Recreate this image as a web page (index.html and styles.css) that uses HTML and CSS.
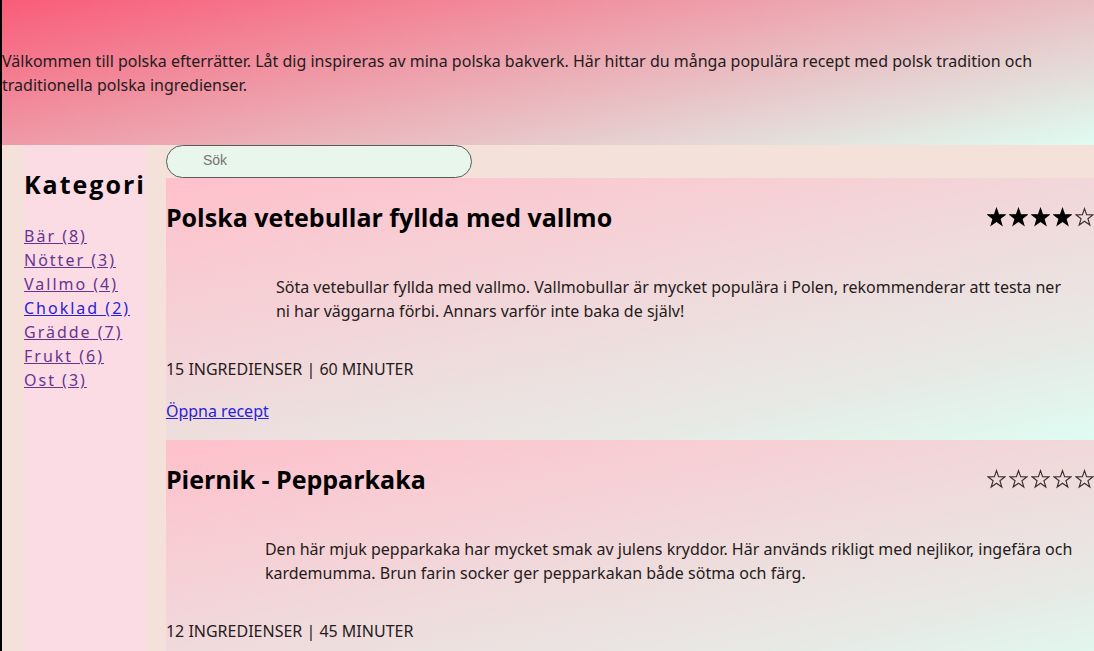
FILE: index.html
```html
<!DOCTYPE html>
<html lang="sv">
<head>
<meta charset="utf-8">
<title>Polska efterrätter</title>
<link rel="stylesheet" href="styles.css">
</head>
<body>
<svg class="symbols" aria-hidden="true">
  <symbol id="star" viewBox="0 0 20 20"><path d="M10 1.2 L12.2 7.6 L19 7.7 L13.6 11.8 L15.6 18.4 L10 14.4 L4.4 18.4 L6.4 11.8 L1 7.7 L7.8 7.6 Z"/></symbol>
</svg>
<header class="hero">
  <p>Välkommen till polska efterrätter. Låt dig inspireras av mina polska bakverk. Här hittar du många populära recept med polsk tradition och traditionella polska ingredienser.</p>
</header>
<div class="layout">
  <nav class="categories">
    <h2>Kategori</h2>
    <ul>
      <li><a class="visited" href="#bar">Bär (8)</a></li>
      <li><a class="visited" href="#notter">Nötter (3)</a></li>
      <li><a class="visited" href="#vallmo">Vallmo (4)</a></li>
      <li><a href="#choklad">Choklad (2)</a></li>
      <li><a class="visited" href="#gradde">Grädde (7)</a></li>
      <li><a class="visited" href="#frukt">Frukt (6)</a></li>
      <li><a class="visited" href="#ost">Ost (3)</a></li>
    </ul>
  </nav>
  <main class="recipes">
    <input class="search" type="search" placeholder="Sök" aria-label="Sök">
    <article class="recipe">
      <div class="recipe-head">
        <h2>Polska vetebullar fyllda med vallmo</h2>
        <div class="rating" role="img" aria-label="4 av 5 stjärnor">
          <svg class="star filled"><use href="#star"/></svg>
          <svg class="star filled"><use href="#star"/></svg>
          <svg class="star filled"><use href="#star"/></svg>
          <svg class="star filled"><use href="#star"/></svg>
          <svg class="star"><use href="#star"/></svg>
        </div>
      </div>
      <p class="description">Söta vetebullar fyllda med vallmo. Vallmobullar är mycket populära i Polen, rekommenderar att testa ner ni har väggarna förbi. Annars varför inte baka de själv!</p>
      <p class="facts">15 INGREDIENSER | 60 MINUTER</p>
      <a href="#vetebullar">Öppna recept</a>
    </article>
    <article class="recipe">
      <div class="recipe-head">
        <h2>Piernik - Pepparkaka</h2>
        <div class="rating" role="img" aria-label="0 av 5 stjärnor">
          <svg class="star"><use href="#star"/></svg>
          <svg class="star"><use href="#star"/></svg>
          <svg class="star"><use href="#star"/></svg>
          <svg class="star"><use href="#star"/></svg>
          <svg class="star"><use href="#star"/></svg>
        </div>
      </div>
      <p class="description wide">Den här mjuk pepparkaka har mycket smak av julens kryddor. Här används rikligt med nejlikor, ingefära och kardemumma. Brun farin socker ger pepparkakan både sötma och färg.</p>
      <p class="facts">12 INGREDIENSER | 45 MINUTER</p>
    </article>
  </main>
</div>
</body>
</html>
```
FILE: styles.css
```css
* { box-sizing: border-box; }
body {
  margin: 0;
  min-height: 100vh;
  display: flex;
  flex-direction: column;
  border-left: 2px solid #000;
  background: #f4e1da;
  color: #251b20;
  font-family: "Noto Sans", sans-serif;
  font-size: 16px;
  line-height: 24px;
  overflow: hidden;
}
h2, p, ul { margin: 0; padding: 0; }
h2 { color: #000; font-family: "Open Sans", sans-serif; font-size: 25px; line-height: 32px; font-weight: 700; }
a { color: #2a22d8; }
.symbols { position: absolute; width: 0; height: 0; }
.hero {
  padding: 49px 0 48px;
  background: linear-gradient(168deg, #f95c78, #e4dcd9 80%, #dffcf2);
}
.layout { flex: 1; display: flex; gap: 20px; padding-left: 22px; }
.categories {
  flex: none;
  padding-top: 23px;
  background: #fbdce5;
  letter-spacing: 2px;
}
.categories ul { margin-top: 24px; list-style: none; }
.categories a.visited { color: #673591; }
.recipes { flex: 1; min-width: 0; }
.search {
  display: block;
  width: 33%;
  height: 33px;
  padding: 0 36px 3px;
  border: 1px solid #575c58;
  border-radius: 17px;
  background: #e8f6eb;
  font: 14px "Liberation Sans", sans-serif;
}
.search::placeholder { color: #757575; }
.recipe {
  padding: 23px 0 17px;
  background: linear-gradient(168deg, #ffc0cb, #e7e9e5 78%, #dffcf2);
}
.recipe-head { display: flex; justify-content: space-between; }
.rating { display: flex; gap: 3px; padding-top: 6px; }
.star { width: 19px; height: 20px; fill: none; stroke: #3b2f34; stroke-width: 1.2; }
.star.filled { fill: #000; stroke: #000; }
.description { margin: 42px 0 34px; padding: 0 20px 0 110px; }
.description.wide { padding: 0 0 0 99px; }
.facts { margin-bottom: 18px; }
```
